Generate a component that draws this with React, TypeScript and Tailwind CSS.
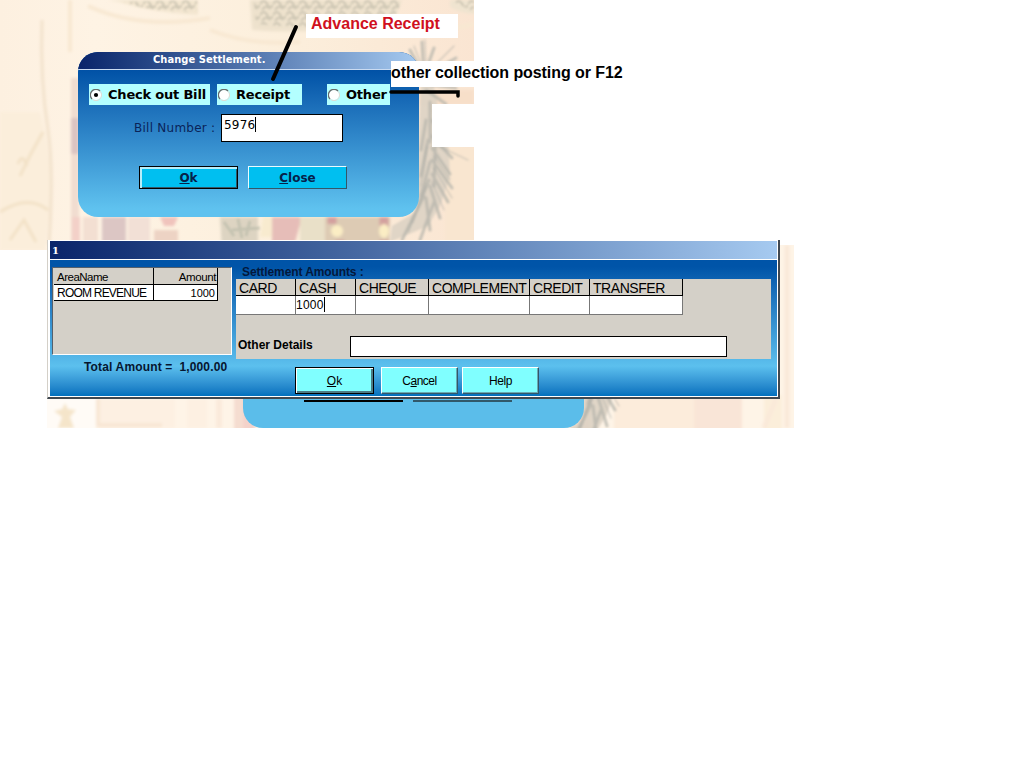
import type { ReactNode } from 'react';

function Palm({ x, y }: { x: number; y: number }) {
  return (
    <g transform={`translate(${x} ${y})`} fill="none" strokeLinecap="round">
      <g filter="url(#blend)">
        <path d="M-3 4L8 2L14 30L24 60L26 100L16 130L4 150L-34 166L-32 150L-8 136Z" fill="#ddd3c4" opacity="0.9" />
        <g stroke="#b5b4ab" strokeWidth="3" opacity="0.75">
          <path d="M0 0L-14-26M0 0L-2-34M0 0L10-28M0 0L32-18M0 0L-16-12M0 8L32 12M2 14L22 28" />
          <path d="M8 44L20 62M6 58L28 82M8 72L26 98M8 84L28 112M8 98L24 126M6 110L16 142M2 122L6 154M2 44L-3 74M4 64L-3 100M6 86L-3 120M5 104L-12 146M0 120L-22 164M10 126L-4 164M6 26L6 66M12 50L10 110" />
        </g>
      </g>
      <g stroke="#a3a5a0" strokeWidth="1.3" opacity="0.5" filter="url(#blend)">
        <path d="M0-4L-10-30M2-4L1-36M6-6L30-30M8 2L36 8M10 68L44 84M9 34L24 56M10 80L26 104M10 92L28 122M8 106L20 134M3 70L-3 110M2 110L-16 156" />
      </g>
    </g>
  );
}

function UpperBackdrop() {
  return (
    <svg className="absolute left-0 top-0" width="474" height="250" viewBox="0 0 474 250">
      <defs>
        <linearGradient id="wall" x1="0" x2="1">
          <stop offset="0" stopColor="#fdf0e0" />
          <stop offset="0.2" stopColor="#fef3e4" />
          <stop offset="0.6" stopColor="#fcefdc" />
          <stop offset="1" stopColor="#fae5d2" />
        </linearGradient>
        <filter id="soft"><feGaussianBlur stdDeviation="1.6" /></filter>
        <filter id="blend"><feGaussianBlur stdDeviation="0.8" /></filter>
        <pattern id="iron" width="13" height="11" patternUnits="userSpaceOnUse">
          <path d="M0 4Q4-2 7 4T13 5M2 10Q6 4 10 9M6 2L9 7" fill="none" stroke="#c3bdab" strokeWidth="2" />
        </pattern>
      </defs>
      <rect width="474" height="250" fill="url(#wall)" />
      <g filter="url(#soft)">
        <path d="M108 0H198V15Q150 12 120 2Z" fill="#f3e6d0" />
        <path d="M250 0H402L395 18Q330 36 252 30Z" fill="#eee2cd" />
        <path d="M450 0H474V14Q460 13 450 7Z" fill="#efe4d0" />
        <path d="M70 0V52M88 6Q140 30 210 18M402 20Q440 34 474 24M210 30Q250 46 300 42" stroke="#f8e8d2" strokeWidth="4" fill="none" />
        <path d="M0 112H40Q48 140 52 190L45 250H0Z" fill="#fbeedb" />
        <path d="M18 164Q22 152 27 166M20 176Q30 154 43 132M0 212Q28 194 48 210M10 240L24 220L36 242" stroke="#f2e1c6" strokeWidth="3" fill="none" />
        <path d="M42 20Q40 80 48 130Q54 170 49 244" stroke="#f2e2cc" strokeWidth="3" fill="none" />
        <rect x="71" y="78" width="8" height="172" fill="#f1ddd0" />
        <rect x="71" y="118" width="8" height="36" fill="#dcc4c2" />
        <rect x="72" y="217" width="8" height="33" fill="#f3d0c8" />
        <rect x="83" y="217" width="15" height="33" fill="#f3dfd2" />
        <rect x="102" y="217" width="24" height="33" fill="#dcc6c4" />
        <rect x="128" y="217" width="22" height="33" fill="#f2e0d6" />
        <path d="M154 230H178V250H154Z" fill="#edd3c4" />
        <path d="M160 217H178L174 226H164Z" fill="#f0c3bc" />
        <path d="M220 217H258V250H222Z" fill="#ddd4c2" />
        <path d="M263 217H272V237H260Z" fill="#f8ebcf" />
        <path d="M272 217H302L293 250H272Z" fill="#e6bdb8" />
        <rect x="300" y="217" width="25" height="33" fill="#e9e0c8" />
        <rect x="325" y="217" width="65" height="33" fill="#ddcbb4" />
        <path d="M332 217V224M384 217V226M340 240V250M384 240V250" stroke="#d3a09e" strokeWidth="9" />
        <circle cx="337" cy="231" r="6" fill="#fbedc4" />
        <ellipse cx="384" cy="231" rx="5" ry="7" fill="#fbedc4" />
        <rect x="419" y="90" width="55" height="15" fill="#f7dfc9" />
        <rect x="445" y="147" width="29" height="103" fill="#f9e6d0" />
      </g>
      <path d="M124 2L197 0V12Q150 12 124 2ZM254 0H402L395 16Q330 32 256 24ZM451 0H474V12Z" fill="url(#iron)" opacity="0.75" filter="url(#blend)" />
      <path d="M224 222L234 236M238 219L242 238M250 221L246 236M232 230L260 228" stroke="#bbbcaa" strokeWidth="3" opacity="0.7" filter="url(#blend)" />
      <Palm x={424} y={76} />
    </svg>
  );
}

function LowerBackdrop() {
  return (
    <svg className="absolute left-[47px] top-[245px]" width="747" height="183" viewBox="47 245 747 183">
      <rect x="47" y="245" width="747" height="183" fill="#fef4e7" />
      <g filter="url(#soft)">
        <path d="M44 395H96V431H44Z" fill="#fffbf6" />
        <path d="M65 403L68 409L76 410L70 417L74 428H58L62 417L54 411L62 409Z" fill="#f5e5ca" />
        <path d="M98 399H175V428H98ZM187 399H207V428H187Z" fill="#fdf0e2" />
        <path d="M98 399V425H162" stroke="#f8e6d4" strokeWidth="4" fill="none" />
        <path d="M219 399V428" stroke="#faeadb" strokeWidth="6" />
        <rect x="234" y="395" width="9" height="36" fill="#f5ddd0" />
        <rect x="243" y="395" width="12" height="36" fill="#f4d2ca" />
        <rect x="572" y="395" width="18" height="36" fill="#f4dccb" />
        <rect x="614" y="395" width="80" height="36" fill="#fcecdb" />
        <rect x="694" y="395" width="48" height="36" fill="#f9e5d7" />
        <rect x="764" y="395" width="18" height="36" fill="#fbeeda" />
        <path d="M764 428L776 399M787 245V428" stroke="#fae9d9" strokeWidth="5" />
      </g>
      <Palm x={591} y={284} />
    </svg>
  );
}

function Radio({ label, checked, className }: { label: string; checked?: boolean; className: string }) {
  return (
    <label className={`flex h-[21px] items-center bg-[#b3ffff] pl-px font-['DejaVu_Sans'] text-[13px] font-bold text-black ${className}`}>
      <svg width="12" height="12" viewBox="0 0 12 12" className="mr-[6px] shrink-0">
        <circle cx="6" cy="6" r="5" fill="#fff" />
        <path d="M2 10A5.5 5.5 0 0 1 10 2" fill="none" stroke="#6b6b6b" strokeWidth="1.3" />
        <path d="M10 2A5.5 5.5 0 0 1 2 10" fill="none" stroke="#e0ddd6" strokeWidth="1" />
        {checked && <circle cx="6" cy="6" r="2.1" fill="#000" />}
      </svg>
      <span className="whitespace-nowrap">{label}</span>
    </label>
  );
}

function BlueButton({ children, primary }: { children: ReactNode; primary?: boolean }) {
  return (
    <button className={`h-[23px] w-[99px] border bg-[#00bff0] pt-px font-['DejaVu_Sans'] text-[12px] font-bold leading-none text-[#06224a] ${primary ? 'border-black shadow-[inset_2px_2px_0_#b8eefa,inset_-1px_-1px_0_#31586a]' : 'border-b-[#31586a] border-l-[#e8faff] border-r-[#31586a] border-t-[#e8faff]'}`}>
      {children}
    </button>
  );
}

function AquaButton({ children, primary, className }: { children: ReactNode; primary?: boolean; className: string }) {
  return (
    <button className={`h-[27px] border bg-[#80ffff] text-[12px] leading-none text-black ${primary ? 'border-black shadow-[inset_1px_1px_0_#fff,inset_-2px_-2px_0_#4b7c87]' : 'border-b-[#31586a] border-l-white border-r-[#31586a] border-t-white shadow-[inset_-1px_-1px_0_#6aa9b3]'} ${className}`}>
      {children}
    </button>
  );
}

function ChangeSettlement() {
  return (
    <section className="absolute left-[78px] top-[52px] flex h-[165px] w-[341px] flex-col overflow-hidden rounded-[20px] bg-linear-to-b from-[#0050a5] from-10% to-[#5fc2ef] to-95%">
      <header className="h-[18px] shrink-0 border-b border-[#cbdcf2] bg-linear-to-r from-[#0a246a] to-[#a6caf0] pl-[75px] font-['DejaVu_Sans_Condensed','DejaVu_Sans'] text-[11px] font-bold leading-[16px] tracking-[0.07px] text-white">
        Change Settlement.
      </header>
      <div className="mt-[14px] flex pl-[11px]">
        <Radio label="Check out Bill" checked className="w-[121px] tracking-[-0.2px]" />
        <Radio label="Receipt" className="ml-[7px] w-[85px] tracking-[-0.2px]" />
        <Radio label="Other" className="ml-[25px] w-[63px] tracking-[-0.2px]" />
      </div>
      <div className="mt-[9px] flex pl-[56px]">
        <span className="w-[87px] whitespace-nowrap pt-[6px] font-['DejaVu_Sans'] text-[12px] leading-[17px] tracking-[0.25px] text-[#0a2358]">Bill Number :</span>
        <div className="flex h-[28px] w-[122px] items-start border border-black bg-white pl-[2px] font-['DejaVu_Sans'] text-[12px] leading-[20px] tracking-[0.2px] text-black">
          <span>5976</span>
          <span className="mt-[2px] h-[15px] w-px bg-black" />
        </div>
      </div>
      <div className="mt-[24px] flex gap-[10px] pl-[61px]">
        <BlueButton primary><u>O</u>k</BlueButton>
        <BlueButton><u>C</u>lose</BlueButton>
      </div>
    </section>
  );
}

const columns = [
  { name: 'CARD', width: 'w-[60px]', value: '' },
  { name: 'CASH', width: 'w-[60px]', value: '1000' },
  { name: 'CHEQUE', width: 'w-[73px]', value: '' },
  { name: 'COMPLEMENT', width: 'w-[101px]', value: '' },
  { name: 'CREDIT', width: 'w-[60px]', value: '' },
  { name: 'TRANSFER', width: 'w-[93px]', value: '' },
];

function SettlementWindow() {
  return (
    <section className="absolute left-[47px] top-[240px] flex h-[159px] w-[733px] flex-col border-b-2 border-l border-r-2 border-b-[#404850] border-l-[#d4d0c8] border-r-[#404850] bg-white pb-px pl-[2px] pr-px pt-px">
      <header className="h-[19px] shrink-0 border-b border-white bg-linear-to-r from-[#0a246a] to-[#a6caf0] pl-[2px] font-['DejaVu_Serif'] text-[10px] font-bold leading-[19px] text-white">1</header>
      <div className="flex min-h-0 flex-1 bg-linear-to-b from-[#0054a8] from-5% via-[#5cc0ee] via-78% to-[#0070bd] pl-[2px]">
        <div className="w-[180px] pt-[7px]">
          <div className="h-[88px] w-[180px] border border-b-white border-l-[#55606c] border-r-white border-t-[#55606c] bg-[#d4d0c8] pl-px text-[11px] leading-[15px] text-black">
            <div className="flex h-[17px] w-[164px] border-b border-black">
              <div className="w-[100px] border-r border-black pl-[3px] pt-[2px] text-[11.5px] tracking-[-0.5px]">AreaName</div>
              <div className="flex-1 border-r border-black pr-px pt-[2px] text-right text-[11.5px] tracking-[-0.4px]">Amount</div>
            </div>
            <div className="flex h-[16px] w-[164px] border-b border-black bg-white">
              <div className="w-[100px] whitespace-nowrap border-r border-black pl-[3px] pt-px text-[12px] tracking-[-0.78px]">ROOM REVENUE</div>
              <div className="flex-1 border-r border-black pr-[2px] pt-px text-right">1000</div>
            </div>
          </div>
          <div className="whitespace-pre pl-[32px] pt-[5px] text-[12px] font-bold leading-[15px] tracking-[0.15px] text-[#061630]">Total Amount =  1,000.00</div>
        </div>
        <div className="ml-[4px] flex-1">
          <div className="h-[19px] overflow-hidden pl-[6px] pt-[4px] text-[12px] font-bold leading-[16px] tracking-[-0.1px] text-[#03183c]">Settlement Amounts :</div>
          <div className="flex h-[80px] w-[535px] flex-col bg-[#d4d0c8] text-black">
            <div className="flex">
              {columns.map((c) => (
                <div key={c.name} className={c.width}>
                  <div className="h-[17px] border-b border-r border-black pl-[3px] text-[14px] leading-[18px] tracking-[-0.45px]">{c.name}</div>
                  <div className="flex h-[19px] border-b border-r border-[#777] bg-white text-[12px] leading-[18px] tracking-[0.25px]">
                    {c.value && <><span>{c.value}</span><span className="mt-px h-[15px] w-px bg-black" /></>}
                  </div>
                </div>
              ))}
            </div>
            <div className="mt-[21px] flex">
              <span className="w-[114px] pl-[2px] text-[12px] font-bold leading-[18px]">Other Details</span>
              <div className="h-[21px] w-[377px] border border-black bg-white" />
            </div>
          </div>
          <div className="mt-[8px] flex pl-[59px]">
            <AquaButton primary className="w-[79px]"><u>O</u>k</AquaButton>
            <AquaButton className="ml-[7px] w-[77px] tracking-[-0.5px]">C<u>a</u>ncel</AquaButton>
            <AquaButton className="ml-[4px] w-[77px] tracking-[-0.4px]">Help</AquaButton>
          </div>
        </div>
      </div>
    </section>
  );
}

export default function App() {
  return (
    <main className="relative h-[768px] w-[1024px] overflow-hidden bg-white font-['Liberation_Sans',sans-serif]">
      <UpperBackdrop />
      <LowerBackdrop />
      <div className="absolute left-[243px] top-[399px] flex h-[29px] w-[341px] gap-[10px] rounded-b-[20px] bg-[#5bbdea] pl-[61px]">
        <div className="h-[3px] w-[99px] border-b-2 border-black" />
        <div className="h-[3px] w-[99px] border-b-2 border-[#31586a]" />
      </div>
      <ChangeSettlement />
      <SettlementWindow />
      <div className="absolute left-[432px] top-[104px] h-[43px] w-[42px] bg-white" />
      <div className="absolute left-[306px] top-[14px] h-[24px] w-[152px] bg-white pl-[5px] text-[16px] font-bold leading-[19px] text-[#d01020]">Advance Receipt</div>
      <div className="absolute left-[391px] top-[61px] h-[26px] w-[240px] whitespace-nowrap bg-white text-[16px] font-bold leading-[23px] tracking-[-0.07px] text-black">other collection posting or F12</div>
      <svg className="absolute left-[265px] top-[20px]" width="200" height="82" viewBox="265 20 200 82" fill="none" stroke="#000" strokeLinecap="round">
        <path d="M296 27L273 79" strokeWidth="4" />
        <path d="M391 92H458V96" strokeWidth="3.5" />
      </svg>
    </main>
  );
}
